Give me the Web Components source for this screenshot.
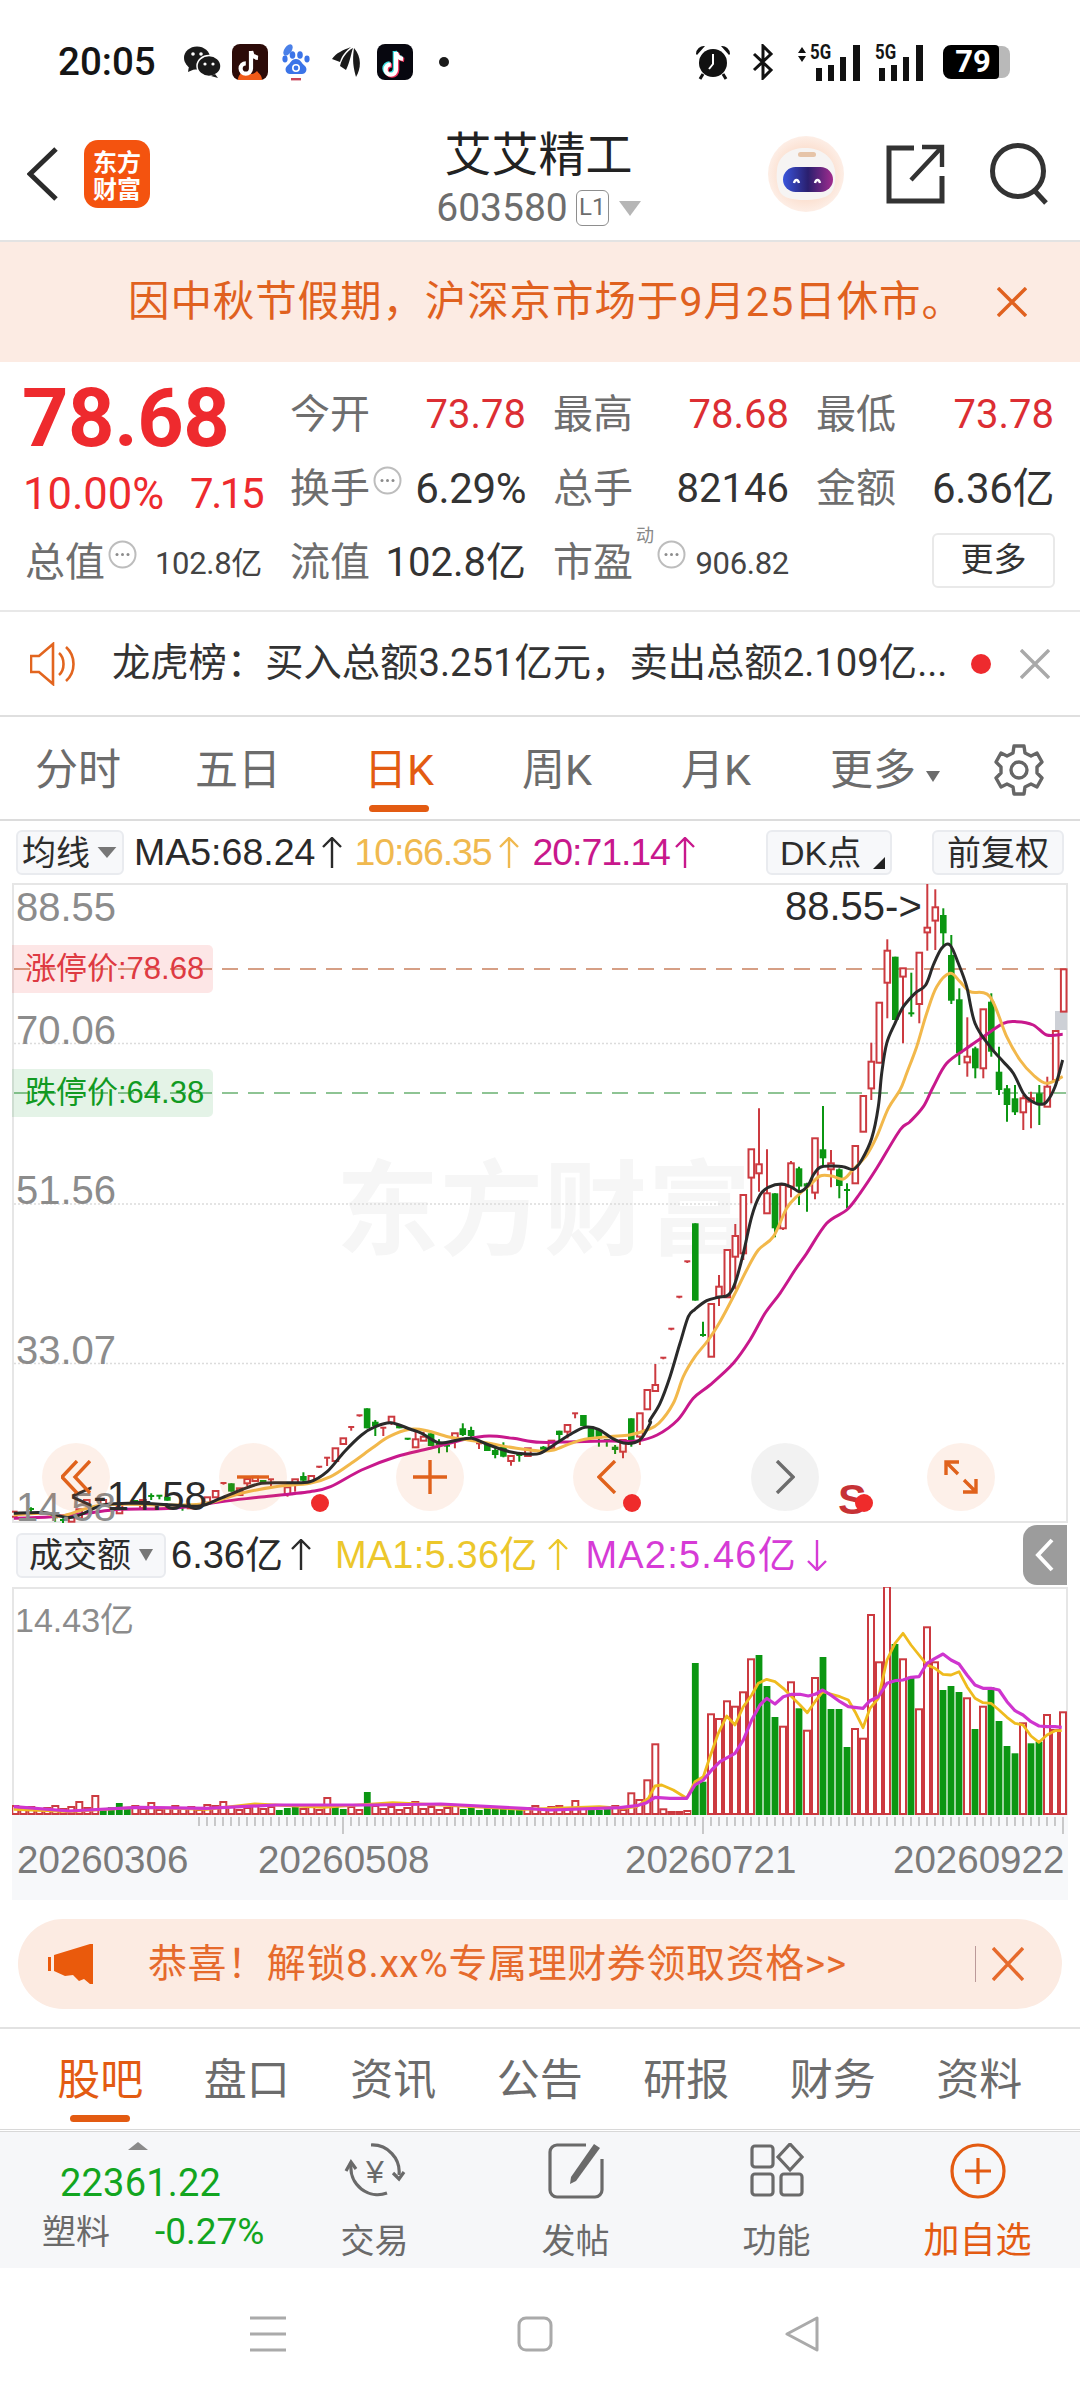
<!DOCTYPE html>
<html lang="zh">
<head>
<meta charset="utf-8">
<title>艾艾精工</title>
<style>
  html, body { margin: 0; padding: 0; background: #fff; }
  body {
    width: 1080px;
    height: 2400px;
    overflow: hidden;
    font-family: Roboto, "Noto Sans CJK SC", sans-serif;
  }
</style>
</head>
<body>
  <status-bar></status-bar>
  <stock-header></stock-header>
  <notice-bar>因中秋节假期，沪深京市场于9月25日休市。</notice-bar>
  <quote-panel></quote-panel>
  <ticker-bar>龙虎榜：买入总额3.251亿元，卖出总额2.109亿...</ticker-bar>
  <period-tabs></period-tabs>
  <k-chart></k-chart>
  <vol-chart></vol-chart>
  <promo-banner>恭喜！解锁8.xx%专属理财券领取资格&gt;&gt;</promo-banner>
  <sub-tabs></sub-tabs>
  <bottom-bar></bottom-bar>
  <nav-bar></nav-bar>

<script>
const CHART_FONT = '"Liberation Sans", "Noto Sans CJK SC", sans-serif'
const ORANGE = '#e35b12'
const RED_K = '#cc3a40'
const GREEN_K = '#0b9612'

// Curva suave por los puntos (catmull-rom a bezier)
function smooth (pts) {
  let d = `M${pts[0][0].toFixed(1)} ${pts[0][1].toFixed(1)}`
  for (let i = 0; i < pts.length - 1; i++) {
    const p0 = pts[i - 1] || pts[i]
    const p1 = pts[i]
    const p2 = pts[i + 1]
    const p3 = pts[i + 2] || p2
    const c1x = p1[0] + (p2[0] - p0[0]) / 6
    const c1y = p1[1] + (p2[1] - p0[1]) / 6
    const c2x = p2[0] - (p3[0] - p1[0]) / 6
    const c2y = p2[1] - (p3[1] - p1[1]) / 6
    d += `C${c1x.toFixed(1)} ${c1y.toFixed(1)} ${c2x.toFixed(1)} ${c2y.toFixed(1)} ${p2[0].toFixed(1)} ${p2[1].toFixed(1)}`
  }
  return d
}

function polyline (pts) {
  return pts.map(p => p[0].toFixed(1) + ',' + p[1].toFixed(1)).join(' ')
}

// Flecha fina de las leyendas de medias
function arrow (color, down, ml = 6) {
  const d = down ? 'M12 1v30M3 22l9 9 9-9' : 'M12 31V1M3 10l9-9 9 9'
  return `<svg width="24" height="32" viewBox="0 0 24 32" fill="none" stroke="${color}" stroke-width="2.4" style="margin-left:${ml}px;flex:none"><path d="${d}"/></svg>`
}

// Barra de estado
class StatusBar extends HTMLElement {
  constructor () {
    super()
    this.attachShadow({ mode: 'open' })
  }

  static Styles = `
    :host { display: flex; height: 100px; align-items: center; padding: 24px 0 0 58px; box-sizing: border-box; color: #151515; }
    .time { font: 500 38.5px/40px Roboto, sans-serif; width: 125px; letter-spacing: 0; }
    .left { display: flex; align-items: center; }
    .right { display: flex; align-items: center; margin-left: auto; margin-right: 70px; }
    svg { display: block; }
    .g5 { position: relative; width: 67px; height: 38px; }
    .g5 b { position: absolute; top: -3px; font: 700 21px/24px Roboto, sans-serif; transform: scaleX(.8); transform-origin: left top; }
    .g5 svg { position: absolute; left: 0; top: 0; }
    .batt { position: relative; width: 67px; height: 34px; margin-left: 18px; }
    .batt span { position: absolute; left: 0; top: 0; width: 56px; height: 34px; background: #000; color: #fff; border-radius: 8px 4px 4px 8px;
      font: 700 31px/34px Roboto, sans-serif; text-align: center; padding-left: 4px; box-sizing: border-box; }
    .batt i { position: absolute; left: 50px; top: 1px; width: 17px; height: 32px; background: #b9b9b9; border-radius: 0 8px 8px 0; }
  `

  connectedCallback () {
    this.render()
  }

  render () {
    const note = (c, dx, dy) => `<path d="M${19 + dx} ${8 + dy}v17.5a5.2 5.2 0 1 1-5.2-5.2" fill="none" stroke="${c}" stroke-width="4.2"/><path d="M${19 + dx} ${8 + dy}c.6 4 3 6.4 7 6.8" fill="none" stroke="${c}" stroke-width="4.2"/>`
    this.shadowRoot.innerHTML = /* HTML */`
      <style>${StatusBar.Styles}</style>
      <span class="time">20:05</span>
      <div class="left">
        <svg width="38" height="34" viewBox="0 0 38 34" style="margin-right:11px">
          <ellipse cx="14" cy="13" rx="13" ry="11.5" fill="#1a1a1a"/><path d="M6 21l-1 6 7-3z" fill="#1a1a1a"/>
          <ellipse cx="26" cy="21" rx="12" ry="10.5" fill="#1a1a1a" stroke="#fff" stroke-width="1.5"/><path d="M32 29l3 4-7-2z" fill="#1a1a1a"/>
          <circle cx="10" cy="9" r="1.8" fill="#fff"/><circle cx="18" cy="9" r="1.8" fill="#fff"/>
          <circle cx="22" cy="19" r="1.6" fill="#fff"/><circle cx="30" cy="19" r="1.6" fill="#fff"/>
        </svg>
        <svg width="36" height="36" viewBox="0 0 36 36" style="margin-right:12px">
          <rect width="36" height="36" rx="8" fill="#2c0b08"/>
          <path d="M6 36c0-5 3-6 5-9 1 2 3 3 7 3s6-2 7-3c2 3 5 4 5 9z" fill="#f05a18"/>
          ${note('#fff', 0, -1)}
        </svg>
        <svg width="32" height="37" viewBox="0 0 32 37" style="margin-right:20px">
          <ellipse cx="8" cy="6" rx="3.6" ry="6.4" transform="rotate(35 8 6)" fill="#4a80e8"/>
          <ellipse cx="5" cy="15" rx="2.6" ry="3.4" fill="#3b74e8"/><ellipse cx="12.5" cy="11" rx="2.8" ry="3.8" fill="#3b74e8"/>
          <ellipse cx="20" cy="11" rx="2.8" ry="3.8" fill="#3b74e8"/><ellipse cx="27" cy="15" rx="2.6" ry="3.4" fill="#3b74e8"/>
          <path d="M16 15c5 0 5 4 9 7 3 3 1 8-3 8H10c-4 0-6-5-3-8 4-3 4-7 9-7z" fill="#3b74e8"/>
          <circle cx="16" cy="24" r="3.2" fill="none" stroke="#fff" stroke-width="1.6"/>
          <rect x="11" y="34" width="10" height="2.4" fill="#c9465a"/>
        </svg>
        <svg width="30" height="32" viewBox="0 0 30 32" style="margin-right:15px">
          <path d="M0 13C4 7 11 4 19 1c-5 4-9 8-11 15z" fill="#1a1a1a"/>
          <path d="M8 20C10 12 15 5 21 2c-2 6-3 14-7 22z" fill="#1a1a1a"/>
          <path d="M22 2c-1 8-2 16 2 29 5-8 6-20-2-29z" fill="#1a1a1a"/>
        </svg>
        <svg width="36" height="36" viewBox="0 0 36 36" style="margin-right:26px">
          <rect width="36" height="36" rx="8" fill="#07070f"/>
          ${note('#3fe2e6', -1.2, -1)}${note('#f0315a', 1.2, 1)}${note('#fff', 0, 0)}
        </svg>
        <svg width="10" height="10"><circle cx="5" cy="5" r="5" fill="#1a1a1a"/></svg>
      </div>
      <div class="right">
        <svg width="38" height="38" viewBox="0 0 38 38" style="margin-right:20px">
          <path d="M2 11a8 8 0 0 1 9-8l-8 9zM36 11a8 8 0 0 0-9-8l8 9z" fill="#111"/>
          <circle cx="19" cy="20" r="14" fill="#111"/>
          <path d="M19 11v10l-4 5" fill="none" stroke="#fff" stroke-width="2"/>
          <path d="M9 31l-3 5M29 31l3 5" stroke="#111" stroke-width="3"/>
        </svg>
        <svg width="22" height="36" viewBox="0 0 22 36" style="margin-right:21px">
          <path d="M2 10l17 16-8 8V2l8 8L2 26" fill="none" stroke="#111" stroke-width="3"/>
        </svg>
        <div class="g5">
          <svg width="67" height="38" viewBox="0 0 67 38">
            <path d="M3 10l4-6 4 6zM3 13h8l-4 6z" fill="#111"/>
            <path d="M21 38V25h6v13zM33 38V22h6v16zM45 38V14h6v24zM58 38V2h7v36z" fill="#111"/>
          </svg>
          <b style="left:15px">5G</b>
        </div>
        <div class="g5" style="margin-left:13px;width:50px">
          <svg width="50" height="38" viewBox="0 0 50 38">
            <path d="M4 38V25h6v13zM16 38V22h6v16zM28 38V14h6v24zM41 38V2h7v36z" fill="#111"/>
          </svg>
          <b style="left:0">5G</b>
        </div>
        <div class="batt"><i></i><span>79</span></div>
      </div>
    `
  }
}

// Cabecera con nombre de la accion
class StockHeader extends HTMLElement {
  constructor () {
    super()
    this.attachShadow({ mode: 'open' })
  }

  static Styles = `
    :host { display: grid; grid-template-columns: 1fr auto 1fr; height: 142px; box-sizing: border-box; border-bottom: 2px solid #e3e3e3; padding: 0 30px 0 27px; }
    .side { display: flex; align-items: center; padding-top: 8px; }
    .side.r { justify-content: flex-end; }
    .logo { width: 66px; height: 68px; background: #f4530f; border-radius: 14px; margin-left: 26px; color: #fff;
      font: 700 24px/27px "Noto Sans CJK SC", sans-serif; text-align: center; padding-top: 7px; box-sizing: border-box; letter-spacing: 0; }
    .mid { text-align: center; padding-top: 23px; }
    .name { font: 400 47px/56px "Noto Sans CJK SC", sans-serif; color: #222; }
    .code { display: flex; align-items: center; justify-content: center; height: 50px; margin-top: 4px; color: #6d6d6d; font: 400 39px/50px Roboto, sans-serif; }
    .l1 { width: 33px; height: 36px; box-sizing: border-box; border: 1.5px solid #8e8e8e; border-radius: 6px; margin-left: 8px; font: 400 24px/33px Roboto, sans-serif; text-align: center; }
    .tri { width: 0; height: 0; border-left: 11px solid transparent; border-right: 11px solid transparent; border-top: 15px solid #b6b6b6; margin-left: 10px; }
    svg { display: block; }
  `

  connectedCallback () {
    this.render()
  }

  render () {
    this.shadowRoot.innerHTML = /* HTML */`
      <style>${StockHeader.Styles}</style>
      <div class="side">
        <svg width="31" height="54" viewBox="0 0 31 54"><path d="M29 2L3 27l26 25" fill="none" stroke="#2b2b2b" stroke-width="5"/></svg>
        <div class="logo">东方<br>财富</div>
      </div>
      <div class="mid">
        <div class="name">艾艾精工</div>
        <div class="code">603580<span class="l1">L1</span><span class="tri"></span></div>
      </div>
      <div class="side r">
        <svg width="76" height="76" viewBox="0 0 76 76" style="margin-right:42px">
          <defs>
            <radialGradient id="halo"><stop offset=".55" stop-color="#fbdcca"/><stop offset="1" stop-color="#fdeee6"/></radialGradient>
            <linearGradient id="visor"><stop offset="0" stop-color="#3a55dc"/><stop offset=".5" stop-color="#2a1f6e"/><stop offset="1" stop-color="#a12c8e"/></linearGradient>
          </defs>
          <circle cx="38" cy="38" r="38" fill="url(#halo)"/>
          <path d="M9 34c1-14 13-22 28-22 15 0 28 8 30 22 1 10 0 18-4 23-6 6-17 7-27 7-11 0-21-2-24-8-3-6-4-14-3-22z" fill="#f6f4f3"/>
          <rect x="30" y="16" width="18" height="5" rx="2.5" fill="#e6c4a8"/>
          <rect x="15" y="31" width="50" height="25" rx="12.5" fill="url(#visor)"/>
          <path d="M26 47c1-4 4-4 5 0M47 47c1-4 4-4 5 0" fill="none" stroke="#fff" stroke-width="2.4"/>
        </svg>
        <svg width="60" height="60" viewBox="0 0 60 60" style="margin-right:44px">
          <path d="M28 4H3v53h53V32" fill="none" stroke="#333" stroke-width="5"/>
          <path d="M25 36L55 4M36 3h20v20" fill="none" stroke="#333" stroke-width="4.4"/>
        </svg>
        <svg width="60" height="62" viewBox="0 0 60 62">
          <ellipse cx="28" cy="28" rx="25.5" ry="25.5" fill="none" stroke="#333" stroke-width="5"/>
          <path d="M44 47l12 13" stroke="#333" stroke-width="5"/>
        </svg>
      </div>
    `
  }
}

// Aviso naranja de cierre de mercado
class NoticeBar extends HTMLElement {
  constructor () {
    super()
    this.attachShadow({ mode: 'open' })
    this.shadowRoot.innerHTML = /* HTML */`
      <style>
        :host { display: flex; align-items: center; height: 120px; background: #fcebe3; padding: 0 53px 0 128px; color: #e0611f;
          font: 400 41.5px/1 Roboto, "Noto Sans CJK SC", sans-serif; letter-spacing: .9px; white-space: nowrap; }
        svg { margin-left: auto; display: block; }
      </style>
      <slot></slot>
      <svg width="30" height="30" viewBox="0 0 30 30"><path d="M1 1l28 28M29 1L1 29" stroke="#e0611f" stroke-width="3.4"/></svg>
    `
  }
}

// Icono pequeno gris con puntos
class DotsIcon extends HTMLElement {
  constructor () {
    super()
    this.attachShadow({ mode: 'open' })
    this.shadowRoot.innerHTML = /* HTML */`
      <style>:host { display: inline-block; flex: none; width: 29px; height: 29px; align-self: flex-start; }</style>
      <svg width="29" height="29" viewBox="0 0 29 29">
        <circle cx="14.5" cy="14.5" r="13" fill="none" stroke="#bdbdbd" stroke-width="2"/>
        <circle cx="9" cy="14.5" r="1.5" fill="#8c8c8c"/><circle cx="14.5" cy="14.5" r="1.5" fill="#8c8c8c"/><circle cx="20" cy="14.5" r="1.5" fill="#8c8c8c"/>
      </svg>
    `
  }
}

// Panel de cotizacion
class QuotePanel extends HTMLElement {
  constructor () {
    super()
    this.attachShadow({ mode: 'open' })
  }

  static Styles = `
    :host { display: grid; grid-template-columns: 265px 236px 27px 236px 27px 238px; grid-template-rows: repeat(3, 74px); height: 250px; box-sizing: border-box;
      padding: 16px 0 0 25px; border-bottom: 2px solid #e8e8e8; font: 400 40px/1 Roboto, "Noto Sans CJK SC", sans-serif; color: #333; }
    .big { grid-column: 1; grid-row: 1 / 3; display: flex; flex-direction: column; color: #ee2a2e; }
    .big b { font: 700 81px/76px Roboto, sans-serif; margin: 3px 0 0 -3px; letter-spacing: -.4px; }
    .chg { display: flex; justify-content: space-between; width: 239px; font-size: 43.5px; margin: 16px 0 0 -2px; }
    .chg span + span { font-size: 42px; letter-spacing: -2.5px; }
    .cell { display: flex; align-items: center; white-space: nowrap; }
    .cell > :last-child { margin-left: auto; }
    .c1 { grid-column: 2; } .c2 { grid-column: 4; } .c3 { grid-column: 6; }
    .lb { color: #6e6e6e; }
    .up { color: #dc2e33; }
    .v { font-size: 42px; letter-spacing: -.4px; }
    .sm { font-size: 31px; color: #444; letter-spacing: -.3px; }
    .tot { grid-column: 1; grid-row: 3; width: 237px; }
    sup { font-size: 18px; color: #888; align-self: flex-start; margin: 0 0 0 3px; line-height: 20px; }
    dots-icon { margin: 10px 0 0 3px; }
    .more { justify-self: end; align-self: center; width: 123px; height: 55px; border: 2px solid #e9e9e9; border-radius: 6px; box-sizing: border-box;
      font-size: 33px; line-height: 50px; text-align: center; margin: 0 -1px 6px 0; }
  `

  connectedCallback () {
    this.render()
  }

  render () {
    this.shadowRoot.innerHTML = /* HTML */`
      <style>${QuotePanel.Styles}</style>
      <div class="big">
        <b>78.68</b>
        <div class="chg"><span>10.00%</span><span>7.15</span></div>
      </div>
      <div class="cell c1" style="grid-row:1"><span class="lb">今开</span><span class="up">73.78</span></div>
      <div class="cell c2" style="grid-row:1"><span class="lb">最高</span><span class="up">78.68</span></div>
      <div class="cell c3" style="grid-row:1"><span class="lb">最低</span><span class="up">73.78</span></div>
      <div class="cell c1" style="grid-row:2"><span class="lb">换手</span><dots-icon></dots-icon><span class="v">6.29%</span></div>
      <div class="cell c2" style="grid-row:2"><span class="lb">总手</span><span>82146</span></div>
      <div class="cell c3" style="grid-row:2"><span class="lb">金额</span><span class="v">6.36亿</span></div>
      <div class="cell tot" style="grid-row:3"><span class="lb">总值</span><dots-icon></dots-icon><span class="sm">102.8亿</span></div>
      <div class="cell c1" style="grid-row:3"><span class="lb">流值</span><span>102.8亿</span></div>
      <div class="cell c2" style="grid-row:3"><span class="lb">市盈</span><sup>动</sup><dots-icon></dots-icon><span class="sm">906.82</span></div>
      <div class="more c3" style="grid-row:3">更多</div>
    `
  }
}

// Barra de noticia con altavoz
class TickerBar extends HTMLElement {
  constructor () {
    super()
    this.attachShadow({ mode: 'open' })
    this.shadowRoot.innerHTML = /* HTML */`
      <style>
        :host { display: flex; align-items: center; height: 105px; box-sizing: border-box; border-bottom: 2px solid #dfdfdf; padding: 0 30px 0 30px;
          color: #333; font: 400 38.3px/1 Roboto, "Noto Sans CJK SC", sans-serif; white-space: nowrap; }
        .txt { margin-left: 32px; }
        .dot { width: 20px; height: 20px; background: #ee2a2e; border-radius: 50%; margin-left: auto; }
        svg { display: block; flex: none; }
      </style>
      <svg width="50" height="44" viewBox="0 0 50 44" fill="none" stroke="#e2651f" stroke-width="2.6">
        <path d="M1 14h8L23 2v40L9 30H1z"/>
        <path d="M29 11c6 5 6 17 0 22M36 5c10 9 10 25 0 34"/>
      </svg>
      <span class="txt"><slot></slot></span>
      <span class="dot"></span>
      <svg width="30" height="30" viewBox="0 0 30 30" style="margin-left:29px"><path d="M1 1l28 28M29 1L1 29" stroke="#a9a9a9" stroke-width="3.4"/></svg>
    `
  }
}

// Pestanas de periodo
class PeriodTabs extends HTMLElement {
  constructor () {
    super()
    this.attachShadow({ mode: 'open' })
  }

  static Styles = `
    :host { display: flex; height: 104px; box-sizing: border-box; border-bottom: 2px solid #dcdcdc; padding: 30px 0 0 35px;
      font: 400 43px/46px Roboto, "Noto Sans CJK SC", sans-serif; color: #6c6c6c; white-space: nowrap; }
    .t { display: flex; flex-direction: column; align-items: center; }
    .on { color: ${ORANGE}; }
    .on i { display: block; width: 60px; height: 7px; background: ${ORANGE}; border-radius: 4px; margin-top: 12px; }
    .tri { display: inline-block; width: 0; height: 0; border-left: 7px solid transparent; border-right: 7px solid transparent; border-top: 11px solid #6c6c6c; margin: 0 0 12px 10px; }
    svg { display: block; margin: -3px 0 0 53px; }
  `

  connectedCallback () {
    this.render()
  }

  render () {
    const tabs = [['分时', 0], ['五日', 74], ['日K', 83], ['周K', 88], ['月K', 89], ['更多', 79]]
    tabs[2][2] = 1
    const html = tabs.map(([n, m, on]) => `<div class="t ${on ? 'on' : ''}" style="margin-left:${m}px">${n}${on ? '<i></i>' : ''}</div>`).join('')
    this.shadowRoot.innerHTML = /* HTML */`
      <style>${PeriodTabs.Styles}</style>
      ${html}
      <span class="tri" style="align-self:center;margin-top:-2px"></span>
      <svg width="52" height="52" viewBox="0 0 52 52" fill="none" stroke="#666" stroke-width="3.4" stroke-linejoin="round">
        <path d="M21 2h10l1 7 6 3 6-3 5 9-5 5v6l5 5-5 9-6-3-6 3-1 7H21l-1-7-6-3-6 3-5-9 5-5v-6l-5-5 5-9 6 3 6-3z"/>
        <circle cx="26" cy="26" r="8"/>
      </svg>
    `
  }
}

// Boton pequeno de la barra de graficos
class ToolBtn extends HTMLElement {
  constructor () {
    super()
    this.attachShadow({ mode: 'open' })
    this.shadowRoot.innerHTML = /* HTML */`
      <style>
        :host { display: inline-flex; align-items: center; justify-content: center; position: relative; flex: none; height: 45px; box-sizing: border-box; background: #f7f8fa;
          border: 2px solid #e9ebef; border-radius: 6px; color: #2c2c2c; font: 400 34px/1 ${CHART_FONT}; white-space: nowrap; }
      </style>
      <slot></slot>
    `
  }
}

// Boton redondo sobre el grafico
class ChartBtn extends HTMLElement {
  constructor () {
    super()
    this.attachShadow({ mode: 'open' })
    this.shadowRoot.innerHTML = /* HTML */`
      <style>
        :host { position: absolute; width: 68px; height: 68px; border-radius: 50%; background: rgba(240, 110, 40, .1); display: flex; align-items: center; justify-content: center; }
        :host([gray]) { background: rgba(110, 110, 110, .09); }
      </style>
      <slot></slot>
    `
  }
}

// Grafico de velas
class KChart extends HTMLElement {
  constructor () {
    super()
    this.attachShadow({ mode: 'open' })
  }

  static Styles = `
    :host { display: block; height: 702px; padding: 9px 0 0 16px; box-sizing: border-box; position: relative; }
    .bar { display: flex; align-items: center; height: 45px; font: 400 37.5px/1 ${CHART_FONT}; white-space: nowrap; color: #2a2a2a; padding-right: 16px; }
    .bar > span { flex: none; }
    .frame { position: relative; width: 1056px; height: 640px; margin: 8px 0 0 -4px; box-sizing: border-box; border: 2px solid #e6e6e6; border-right-width: 2px; font-family: ${CHART_FONT}; }
    .frame > svg { position: absolute; left: -2px; top: -2px; }
    .lb { position: absolute; white-space: nowrap; }
    .wm { position: absolute; left: 322px; top: 260px; font: 700 103px/116px "Noto Sans CJK SC", sans-serif; letter-spacing: 1px; color: #f6f6f6; white-space: nowrap; }
    .tag { position: absolute; left: -2px; height: 48px; font-size: 31px; line-height: 48px; padding: 0 9px 0 13px; border-radius: 0 5px 5px 0; white-space: nowrap; }
    .tag.u { background: rgba(240, 60, 60, .13); color: #de3a42; top: 60px; }
    .tag.d { background: rgba(30, 160, 60, .12); color: #129a22; top: 184px; }
    .dot { position: absolute; width: 18px; height: 18px; border-radius: 50%; background: #ef2b2b; }
    .s { position: absolute; font: 700 43px/43px ${CHART_FONT}; color: #c63236; }
    .tri { display: inline-block; width: 0; height: 0; border-left: 11px solid transparent; border-right: 11px solid transparent; border-top: 13px solid #777; margin-left: 6px; }
    .cor { position: absolute; right: 5px; bottom: 4px; width: 0; height: 0; border-left: 12px solid transparent; border-bottom: 12px solid #222; }
  `

  connectedCallback () {
    this.render()
  }

  render () {
    const z7 = (x, y) => [x / 2.904, 1380 + y / 3]
    const z8 = (x, y) => [540 + x / 2.904, 1380 + y / 3]
    const z9 = (x, y) => [750 + x / 3, 880 + y / 3]
    const z10 = (x, y) => [640 + x / 3, 1080 + y / 3]
    const mapAll = (fn, list) => list.map(p => fn(p[0], p[1]))

    // x, mecha arriba, cuerpo arriba, cuerpo abajo, mecha abajo, color
    const candles = []
    const add = (fn, list) => list.forEach(([x, wt, bt, bb, wb, c]) => {
      const [rx, ry1] = fn(x, wt)
      candles.push({ x: rx, wt: ry1, bt: fn(x, bt)[1], bb: fn(x, bb)[1], wb: fn(x, wb)[1], c })
    })

    add(z7, [
      [40, 395, 395, 410, 410, 'r'], [90, 382, 387, 395, 395, 'g'], [160, 410, 412, 418, 425, 'g'], [183, 415, 420, 424, 430, 'g'], [208, 405, 408, 425, 425, 'r'], [230, 388, 388, 415, 415, 'r'],
      [252, 360, 360, 375, 375, 'r'], [300, 360, 360, 375, 375, 'r'], [347, 375, 375, 400, 400, 'r'], [392, 360, 360, 372, 372, 'g'], [415, 360, 360, 385, 385, 'r'], [439, 340, 348, 353, 360, 'g'],
      [463, 345, 347, 351, 358, 'g'], [486, 350, 350, 362, 362, 'g'], [530, 380, 380, 388, 392, 'g'], [553, 375, 375, 385, 385, 'r'], [602, 352, 352, 368, 368, 'r'], [626, 333, 333, 352, 352, 'r'],
      [649, 309, 309, 314, 314, 'r'], [672, 310, 310, 335, 335, 'g'], [696, 325, 325, 345, 345, 'r'], [718, 295, 297, 310, 318, 'r'], [741, 290, 290, 303, 303, 'r'], [764, 300, 300, 310, 310, 'g'], [787, 298, 298, 305, 318, 'r'],
      [835, 322, 322, 342, 350, 'r'], [857, 298, 298, 310, 335, 'r'], [881, 277, 288, 302, 308, 'g'], [904, 288, 288, 303, 303, 'r'], [927, 260, 260, 264, 264, 'r'], [950, 233, 233, 238, 258, 'r'], [974, 205, 205, 243, 243, 'r'], [997, 175, 175, 192, 192, 'r'],
      [1020, 141, 141, 147, 152, 'r'], [1044, 106, 106, 110, 110, 'r'], [1066, 85, 85, 145, 145, 'g'], [1090, 120, 125, 138, 168, 'g'], [1113, 143, 143, 152, 168, 'r'], [1137, 110, 110, 128, 135, 'r'], [1160, 135, 135, 145, 145, 'g'],
      [1184, 176, 176, 180, 180, 'g'], [1207, 155, 178, 202, 202, 'r'], [1230, 155, 170, 182, 182, 'r'], [1252, 160, 160, 198, 198, 'g'], [1275, 178, 185, 195, 220, 'g'], [1298, 197, 197, 205, 217, 'g'], [1321, 160, 160, 175, 205, 'r'],
      [1344, 130, 145, 165, 168, 'g'], [1368, 140, 150, 168, 172, 'g'], [1391, 190, 190, 197, 207, 'r'], [1415, 190, 190, 213, 213, 'g'], [1438, 203, 210, 225, 235, 'g'], [1462, 187, 200, 230, 232, 'g'], [1484, 228, 228, 243, 257, 'r'], [1508, 220, 225, 232, 245, 'g'], [1533, 205, 205, 228, 228, 'r']
    ])
    add(z8, [
      [10, 198, 200, 215, 215, 'g'], [33, 182, 182, 205, 205, 'r'], [56, 152, 152, 165, 183, 'g'], [80, 135, 135, 155, 175, 'r'], [102, 100, 100, 105, 115, 'r'], [126, 105, 105, 138, 138, 'g'], [148, 140, 140, 175, 175, 'g'], [171, 150, 150, 175, 200, 'g'],
      [194, 180, 180, 185, 200, 'g'], [218, 195, 200, 210, 222, 'g'], [241, 178, 180, 215, 235, 'r'], [265, 115, 115, 190, 200, 'g'], [290, 100, 100, 170, 195, 'r']
    ])
    add(z10, [
      [22, 930, 930, 988, 988, 'r'], [46, 852, 915, 933, 933, 'r'], [70, 833, 833, 838, 838, 'r'], [94, 746, 746, 751, 751, 'r'], [118, 650, 650, 655, 655, 'r'], [142, 544, 544, 549, 549, 'r'], [166, 430, 430, 662, 662, 'g'],
      [189, 725, 765, 770, 770, 'g'], [214, 672, 672, 830, 830, 'r'], [237, 585, 620, 650, 678, 'r'], [262, 510, 510, 652, 652, 'r'], [286, 432, 468, 530, 628, 'r'], [310, 345, 345, 520, 540, 'r'], [334, 208, 208, 293, 370, 'r'], [357, 85, 253, 280, 335, 'r'],
      [381, 208, 340, 400, 400, 'r'], [405, 340, 340, 445, 472, 'g'], [429, 310, 315, 445, 450, 'r'], [453, 243, 250, 320, 352, 'r'], [477, 260, 265, 320, 375, 'g'], [501, 308, 310, 320, 395, 'g'], [525, 175, 175, 338, 358, 'r'], [549, 78, 208, 235, 258, 'g'],
      [573, 210, 250, 268, 322, 'r'], [598, 265, 268, 318, 355, 'g'], [621, 310, 330, 338, 385, 'g'], [646, 198, 198, 310, 310, 'r'], [670, 48, 48, 155, 155, 'r']
    ])
    add(z9, [
      [364, 488, 545, 625, 660, 'r'], [388, 368, 368, 548, 550, 'r'], [412, 178, 212, 308, 415, 'r'], [436, 230, 230, 420, 420, 'g'], [459, 265, 265, 290, 490, 'r'], [484, 278, 400, 408, 410, 'g'], [508, 218, 218, 372, 430, 'r'],
      [532, 12, 143, 157, 212, 'r'], [556, 28, 82, 122, 210, 'r'], [580, 85, 105, 160, 200, 'g'], [604, 165, 225, 362, 372, 'g'], [628, 325, 358, 520, 555, 'g'], [652, 412, 530, 547, 590, 'r'], [676, 500, 505, 565, 595, 'g'],
      [700, 388, 388, 565, 595, 'r'], [724, 340, 365, 515, 530, 'g'], [747, 500, 575, 630, 645, 'g'], [771, 615, 625, 675, 725, 'g'], [795, 615, 655, 697, 705, 'g'], [820, 645, 655, 697, 750, 'r'], [843, 635, 655, 665, 745, 'r'],
      [868, 615, 640, 675, 735, 'g'], [892, 590, 620, 680, 680, 'r'], [917, 450, 453, 600, 603, 'r'], [941, 268, 268, 395, 395, 'r']
    ])

    let candleSvg = ''
    candles.forEach(k => {
      const col = k.c === 'r' ? RED_K : GREEN_K
      candleSvg += `<path d="M${k.x.toFixed(1)} ${k.wt.toFixed(1)}V${k.wb.toFixed(1)}" stroke="${col}" stroke-width="2"/>`
      if (k.bb - k.bt > 3) {
        candleSvg += k.c === 'r'
          ? `<rect x="${(k.x - 2.8).toFixed(1)}" y="${k.bt.toFixed(1)}" width="5.6" height="${(k.bb - k.bt).toFixed(1)}" fill="#fff" stroke="${col}" stroke-width="2"/>`
          : `<rect x="${(k.x - 3.3).toFixed(1)}" y="${k.bt.toFixed(1)}" width="6.6" height="${(k.bb - k.bt).toFixed(1)}" fill="${col}"/>`
      } else {
        candleSvg += `<path d="M${(k.x - 3).toFixed(1)} ${k.bt.toFixed(1)}h6" stroke="${col}" stroke-width="2"/>`
      }
    })

    const black = [
      ...mapAll(z7, [[40, 400], [130, 398], [210, 412], [300, 375], [400, 370], [500, 375], [580, 378], [640, 355], [700, 330], [760, 310], [830, 308], [900, 305], [950, 275], [1000, 215], [1050, 165], [1090, 140], [1135, 128], [1190, 147], [1225, 160], [1275, 188], [1330, 180], [1370, 175], [1420, 195], [1480, 215], [1530, 222]]),
      ...mapAll(z8, [[0, 220], [40, 195], [85, 165], [130, 142], [170, 148], [210, 175], [250, 190], [290, 180], [320, 130]]),
      ...mapAll(z10, [[30, 1020], [60, 970], [90, 890], [120, 790], [145, 710], [165, 688], [200, 662], [235, 652], [265, 645], [285, 610], [310, 520], [335, 410], [360, 345], [385, 322], [425, 312], [455, 322], [480, 335], [505, 315], [520, 285], [540, 262], [575, 258], [610, 260], [640, 268], [665, 240], [695, 175], [715, 80]]),
      ...mapAll(z9, [[395, 580], [410, 490], [435, 430], [460, 380], [495, 340], [527, 315], [550, 255], [575, 205], [600, 195], [625, 250], [650, 320], [675, 430], [720, 500], [760, 545], [790, 580], [820, 640], [840, 660], [868, 673], [890, 665], [915, 620], [938, 540]])
    ]
    const yellow = [
      ...mapAll(z7, [[40, 405], [130, 400], [180, 408], [300, 375], [500, 375], [600, 370], [700, 340], [800, 320], [900, 310], [960, 290], [1020, 250], [1080, 205], [1130, 170], [1190, 148], [1240, 152], [1300, 170], [1360, 180], [1420, 190], [1500, 205], [1568, 213]]),
      ...mapAll(z8, [[40, 210], [90, 190], [130, 178], [200, 170], [260, 165], [310, 150], [345, 130]]),
      ...mapAll(z10, [[100, 970], [130, 890], [165, 830], [205, 780], [240, 725], [280, 650], [320, 570], [355, 510], [400, 470], [440, 385], [475, 345], [510, 315], [540, 288], [575, 288], [610, 297], [640, 268], [680, 225], [710, 170], [745, 85], [780, 30]]),
      ...mapAll(z9, [[470, 580], [500, 500], [530, 400], [560, 320], [600, 280], [630, 305], [660, 335], [720, 350], [770, 470], [810, 540], [850, 585], [890, 610], [938, 590]])
    ]
    const purple = [
      ...mapAll(z7, [[40, 415], [150, 410], [250, 400], [350, 388], [500, 385], [640, 365], [750, 352], [900, 335], [960, 320], [1050, 270], [1150, 230], [1250, 205], [1350, 178], [1420, 168], [1490, 175], [1568, 187]]),
      ...mapAll(z8, [[100, 185], [200, 183], [280, 183], [340, 165], [400, 120]]),
      ...mapAll(z10, [[160, 955], [210, 915], [280, 850], [330, 780], [375, 700], [420, 640], [465, 570], [500, 520], [560, 430], [620, 390], [660, 340], [710, 265], [780, 150]]),
      ...mapAll(z9, [[480, 725], [520, 680], [550, 620], [590, 550], [650, 505], [700, 470], [760, 430], [800, 425], [850, 435], [890, 465], [938, 463]])
    ]

    // Etiquetas: posicion en coordenadas de pagina
    const label = (t, x, cy, color, size = 40) => `<span class="lb" style="left:${x - 14}px;top:${cy - size / 2 - 885}px;font-size:${size}px;line-height:${size}px;color:${color}">${t}</span>`
    const stroke = 'fill="none" stroke="#e0621c" stroke-width="3.4"'
    const btn = (cx, icon, gray) => `<chart-btn ${gray ? 'gray' : ''} style="left:${cx - 48}px;top:558px">${icon}</chart-btn>`

    this.shadowRoot.innerHTML = /* HTML */`
      <style>${KChart.Styles}</style>
      <div class="bar">
        <tool-btn style="width:108px">均线<span class="tri" style="transform:scale(.85)"></span></tool-btn>
        <span style="margin-left:10px">MA5:68.24</span>${arrow('#2a2a2a', false, 5)}
        <span style="margin-left:10px;color:#f0b94f;letter-spacing:-1.1px">10:66.35</span>${arrow('#f0b94f', false, 5)}
        <span style="margin-left:12px;color:#c8188c;letter-spacing:-1.1px">20:71.14</span>${arrow('#c8188c', false, 3)}
        <tool-btn style="width:126px;margin-left:auto;justify-content:flex-start;padding-left:12px">DK点<span class="cor"></span></tool-btn>
        <tool-btn style="width:132px;margin-left:40px">前复权</tool-btn>
      </div>
      <div class="frame">
        <div class="wm">东方财富</div>
        <svg width="1056" height="640" viewBox="12 883 1056 640">
          <path d="M14 1043.5H1066M14 1204H1066M14 1363.5H1066" stroke="#dcdcdc" stroke-width="1.4" stroke-dasharray="2 2"/>
          <path d="M14 969H1066" stroke="#c9805e" stroke-width="1.6" stroke-dasharray="16 10"/>
          <path d="M14 1093H1066" stroke="#69b172" stroke-width="1.6" stroke-dasharray="16 10"/>
          <rect x="1055" y="1011" width="12" height="19" fill="#cdd0d6"/>
          ${candleSvg}
          <path d="${smooth(purple)}" fill="none" stroke="#c8188c" stroke-width="3"/>
          <path d="${smooth(yellow)}" fill="none" stroke="#f2b84b" stroke-width="3"/>
          <path d="${smooth(black)}" fill="none" stroke="#2a2a2a" stroke-width="3"/>
        </svg>
        ${label('88.55', 16, 907, '#8c8c8c')}
        ${label('70.06', 16, 1030, '#8c8c8c')}
        ${label('51.56', 16, 1190, '#8c8c8c')}
        ${label('33.07', 16, 1350, '#8c8c8c')}
        ${label('14.58', 16, 1507, '#8c8c8c')}
        ${label('&lt;-14.58', 70, 1496, '#2b2b2b')}
        ${label('88.55-&gt;', 785, 906, '#2b2b2b')}
        <span class="tag u">涨停价:78.68</span>
        <span class="tag d">跌停价:64.38</span>
        ${btn(76, `<svg width="30" height="34" viewBox="0 0 30 34" ${stroke}><path d="M16 1L1 17l15 16M29 1L14 17l15 16"/></svg>`)}
        ${btn(253, `<svg width="32" height="4"><path d="M0 2h32" stroke="#e0621c" stroke-width="3.4"/></svg>`)}
        ${btn(430, `<svg width="34" height="34" viewBox="0 0 34 34" ${stroke}><path d="M0 17h34M17 0v34"/></svg>`)}
        ${btn(607, `<svg width="20" height="34" viewBox="0 0 20 34" ${stroke}><path d="M18 1L2 17l16 16"/></svg>`)}
        ${btn(785, `<svg width="20" height="34" viewBox="0 0 20 34" fill="none" stroke="#6d6d6d" stroke-width="3.4"><path d="M2 1l16 16L2 33"/></svg>`, true)}
        ${btn(961, `<svg width="34" height="34" viewBox="0 0 34 34" ${stroke}><path d="M2 15V2h13M2 2l12 12M32 19v13H19M32 32L20 20"/></svg>`)}
        <span class="dot" style="left:297px;top:609px"></span>
        <span class="dot" style="left:609px;top:609px"></span>
        <span class="s" style="left:824px;top:593px">S</span>
        <span class="dot" style="left:841px;top:609px"></span>
      </div>
    `
  }
}

// Grafico de volumen con eje de fechas
class VolChart extends HTMLElement {
  constructor () {
    super()
    this.attachShadow({ mode: 'open' })
  }

  static Styles = `
    :host { display: block; height: 377px; font-family: ${CHART_FONT}; }
    .bar { display: flex; align-items: center; height: 64px; padding: 0 13px 0 16px; box-sizing: border-box; font-size: 38px; line-height: 1; white-space: nowrap; color: #2a2a2a; }
    .bar > span { flex: none; }
    .tab { margin-left: auto; width: 44px; height: 60px; background: #9c9c9c; border-radius: 14px 0 0 14px; display: flex; align-items: center; justify-content: center; }
    .tri { display: inline-block; width: 0; height: 0; border-left: 7px solid transparent; border-right: 7px solid transparent; border-top: 12px solid #777; margin-left: 8px; }
    .frame { position: relative; width: 1056px; height: 228px; margin-left: 12px; box-sizing: border-box; border: 2px solid #e6e6e6; border-bottom: 0; }
    .frame svg { position: absolute; left: -2px; top: -2px; }
    .max { position: absolute; left: 1px; top: 13px; font-size: 34px; line-height: 36px; color: #8c8c8c; }
    .axis { width: 1056px; height: 85px; margin-left: 12px; background: #f7f8fa; }
    .axis svg { display: block; }
    .dates { display: grid; grid-template-columns: 241px 367px 268px 1fr; padding-left: 5px; margin-top: 3px; font-size: 38.5px; line-height: 44px; color: #7a7a7a; }
  `

  connectedCallback () {
    this.render()
  }

  render () {
    const base = 1814
    // x, tope en coordenadas del zoom, color (de derecha a izquierda)
    const bars = [[1329, 397, 'r'], [1305, 450, 'r'], [1281, 405, 'r'], [1257, 485, 'g'], [1233, 490, 'g'], [1209, 430, 'r'], [1185, 520, 'g'], [1161, 498, 'g'], [1137, 423, 'g'], [1113, 322, 'g'],
      [1089, 380, 'r'], [1065, 447, 'g'], [1041, 355, 'r'], [1017, 336, 'g'], [993, 318, 'g'], [969, 330, 'g'], [945, 247, 'r'], [921, 142, 'r'], [897, 388, 'r'], [873, 290, 'g'], [849, 238, 'r'], [825, 192, 'g'],
      [801, 20, 'r'], [777, 247, 'r'], [753, 105, 'r'], [729, 476, 'r'], [705, 447, 'r'], [681, 501, 'g'], [657, 387, 'g'], [633, 387, 'g'], [609, 231, 'g'], [585, 294, 'r'], [561, 452, 'r'], [537, 385, 'g'], [513, 307, 'r'],
      [489, 440, 'r'], [465, 411, 'g'], [441, 318, 'g'], [417, 225, 'g'], [393, 238, 'r'], [369, 337, 'r'], [345, 380, 'r'], [321, 364, 'r'], [297, 417, 'r'], [273, 403, 'r'], [249, 605, 'g'], [226, 249, 'g'],
      [202, 693, 'r'], [178, 696, 'r'], [154, 696, 'r'], [130, 688, 'r'], [106, 493, 'r'], [82, 601, 'r'], [58, 660, 'r'], [34, 640, 'r'], [10, 690, 'r']]
    const list = bars.map(([x, t, c]) => ({ x: 620 + x / 3, top: 1580 + t / 3, c }))

    // Barras bajas de la parte izquierda
    const spikes = { 79: 12, 95: 18, 118: 11, 151: 11, 207: 9, 222: 12, 327: 16, 367: 22, 415: 12, 561: 8, 575: 13 }
    const greens = [[103, 130], [275, 296], [335, 345], [361, 372], [461, 523], [585, 613]]
    for (let x = 623.3 - 8; x > 13; x -= 8) {
      const spike = Object.keys(spikes).find(s => Math.abs(s - x) <= 4)
      const h = spike ? spikes[spike] : 4 + Math.round(x / 8) * 7 % 5
      const g = greens.some(([a, b]) => x >= a && x <= b)
      list.push({ x, top: base - h, c: g ? 'g' : 'r' })
    }

    let barSvg = ''
    list.forEach(b => {
      barSvg += b.c === 'g'
        ? `<rect x="${(b.x - 3.4).toFixed(1)}" y="${b.top.toFixed(1)}" width="6.8" height="${(base + 1 - b.top).toFixed(1)}" fill="${GREEN_K}"/>`
        : `<rect x="${(b.x - 3).toFixed(1)}" y="${b.top.toFixed(1)}" width="6" height="${(base - b.top).toFixed(1)}" fill="#fff" stroke="${RED_K}" stroke-width="2"/>`
    })

    const z = p => [620 + p[0] / 3, 1580 + p[1] / 3]
    const z5 = p => [p[0] / 1.452, 1500 + p[1] / 3]
    const ma1 = [
      ...[[20, 928], [100, 935], [200, 922], [300, 928], [370, 912], [470, 922], [570, 908], [640, 915], [760, 928], [870, 920], [905, 925]].map(z5),
      ...[[50, 680], [85, 655], [105, 618], [125, 615], [160, 630], [200, 655], [225, 605], [250, 590], [270, 530], [295, 460], [320, 408], [345, 435], [370, 380], [395, 345], [415, 310], [440, 298], [465, 305], [490, 325], [515, 350], [540, 375], [562, 398], [585, 365], [608, 335], [635, 343], [660, 350], [685, 360], [705, 395], [729, 443], [750, 385], [775, 355], [801, 240], [825, 190], [849, 160], [873, 195], [897, 225], [921, 255], [945, 265], [969, 283], [993, 285], [1017, 275], [1041, 320], [1065, 355], [1089, 368], [1113, 370], [1137, 390], [1161, 412], [1185, 430], [1209, 435], [1233, 468], [1257, 487], [1281, 465], [1305, 452], [1325, 452]].map(z)
    ]
    const ma2 = [
      ...[[20, 920], [100, 933], [200, 922], [300, 925], [400, 915], [540, 915], [640, 912], [760, 925], [800, 930], [900, 923]].map(z5),
      ...[[50, 677], [80, 668], [105, 652], [150, 655], [200, 655], [225, 615], [250, 600], [275, 570], [300, 545], [345, 520], [370, 480], [395, 420], [420, 375], [440, 355], [465, 372], [490, 350], [515, 343], [540, 343], [565, 348], [585, 343], [608, 330], [635, 347], [660, 365], [685, 380], [729, 385], [750, 362], [775, 350], [801, 310], [825, 302], [849, 300], [873, 292], [897, 290], [921, 250], [945, 235], [969, 222], [993, 240], [1017, 252], [1041, 285], [1065, 315], [1089, 325], [1113, 325], [1137, 330], [1161, 365], [1185, 392], [1209, 405], [1233, 425], [1257, 438], [1281, 440], [1305, 440], [1325, 442]].map(z)
    ]

    // Marcas del eje
    let ticks = ''
    for (let x = 1063; x > 196; x -= 8) {
      ticks += `M${x - 12} 2v${x === 1063 || x === 703 || x === 343 ? 17 : 9}`
    }

    this.shadowRoot.innerHTML = /* HTML */`
      <style>${VolChart.Styles}</style>
      <div class="bar">
        <tool-btn style="width:150px">成交额<span class="tri"></span></tool-btn>
        <span style="margin-left:5px">6.36亿</span>${arrow('#2a2a2a', false)}
        <span style="margin-left:22px;color:#ecc72b;letter-spacing:.2px">MA1:5.36亿</span>${arrow('#ecc72b', false, 9)}
        <span style="margin-left:15px;color:#d63bd6;letter-spacing:1.2px">MA2:5.46亿</span>${arrow('#d63bd6', true, 8)}
        <div class="tab"><svg width="20" height="34" viewBox="0 0 20 34" fill="none" stroke="#fff" stroke-width="4"><path d="M17 2L3 17l14 15"/></svg></div>
      </div>
      <div class="frame">
        <svg width="1056" height="228" viewBox="12 1587 1056 228">
          ${barSvg}
          <polyline points="${polyline(ma1)}" fill="none" stroke="#efbb1e" stroke-width="2.8" stroke-linejoin="round"/>
          <polyline points="${polyline(ma2)}" fill="none" stroke="#cf35cf" stroke-width="3.2" stroke-linejoin="round"/>
        </svg>
        <span class="max">14.43亿</span>
      </div>
      <div class="axis">
        <svg width="1056" height="20"><path d="${ticks}" stroke="#b5b5b5" stroke-width="1.4"/></svg>
        <div class="dates"><span>20260306</span><span>20260508</span><span>20260721</span><span>20260922</span></div>
      </div>
    `
  }
}

// Banner promocional
class PromoBanner extends HTMLElement {
  constructor () {
    super()
    this.attachShadow({ mode: 'open' })
    this.shadowRoot.innerHTML = /* HTML */`
      <style>
        :host { display: flex; align-items: center; height: 90px; margin: 19px 18px 0; padding: 0 38px 0 30px; border-radius: 45px; background: #fcebe2; color: #e66a2c;
          font: 400 39px/1 Roboto, "Noto Sans CJK SC", sans-serif; letter-spacing: .6px; white-space: nowrap; }
        .txt { margin-left: 54px; }
        .sep { margin-left: auto; width: 1.5px; height: 36px; background: #b99; }
        svg { display: block; flex: none; }
      </style>
      <svg width="46" height="40" viewBox="0 0 46 40">
        <path d="M0 13h3v14H0zM6 11l36-11h3v40h-3l-6-5-5 2-6-6-8 1-11-5z" fill="#ea5a0c"/>
      </svg>
      <span class="txt"><slot></slot></span>
      <span class="sep"></span>
      <svg width="32" height="34" viewBox="0 0 32 34" style="margin-left:16px"><path d="M1 1l30 32M31 1L1 33" stroke="#e66a2c" stroke-width="3.4"/></svg>
    `
  }
}

// Pestanas inferiores
class SubTabs extends HTMLElement {
  constructor () {
    super()
    this.attachShadow({ mode: 'open' })
  }

  static Styles = `
    :host { display: grid; grid-template-columns: repeat(7, 146.5px); height: 105px; margin-top: 18px; box-sizing: border-box; padding: 28px 0 0 27px;
      border-top: 2px solid #e2e2e2; border-bottom: 3px double #d8d8d8; font: 400 43px/46px Roboto, "Noto Sans CJK SC", sans-serif; color: #6c6c6c; }
    div { display: flex; flex-direction: column; align-items: center; }
    .on { color: ${ORANGE}; }
    .on i { display: block; width: 60px; height: 7px; background: ${ORANGE}; border-radius: 4px; margin-top: 12px; }
  `

  connectedCallback () {
    this.render()
  }

  render () {
    const tabs = ['股吧', '盘口', '资讯', '公告', '研报', '财务', '资料']
    this.shadowRoot.innerHTML = /* HTML */`
      <style>${SubTabs.Styles}</style>
      ${tabs.map((t, i) => i === 0 ? `<div class="on">${t}<i></i></div>` : `<div>${t}</div>`).join('')}
    `
  }
}

// Accion de la barra inferior
class BarAction extends HTMLElement {
  constructor () {
    super()
    this.attachShadow({ mode: 'open' })
    this.shadowRoot.innerHTML = /* HTML */`
      <style>
        :host { display: flex; flex-direction: column; align-items: center; padding-top: 11px; color: #6a6a6a; font: 400 34px/40px Roboto, "Noto Sans CJK SC", sans-serif; }
        :host([active]) { color: ${ORANGE}; font-size: 36px; }
        .ic { height: 58px; margin-bottom: 20px; }
      </style>
      <div class="ic"><slot name="icon"></slot></div>
      <slot></slot>
    `
  }
}

// Barra inferior
class BottomBar extends HTMLElement {
  constructor () {
    super()
    this.attachShadow({ mode: 'open' })
  }

  static Styles = `
    :host { display: grid; grid-template-columns: 274px repeat(4, 201px); height: 136px; background: #f6f7f9; font: 400 34px/40px Roboto, "Noto Sans CJK SC", sans-serif; color: #6a6a6a; }
    .tri { width: 0; height: 0; border-left: 10px solid transparent; border-right: 10px solid transparent; border-bottom: 8px solid #8a8a8a; margin: 10px 0 0 128px; }
    .pr { margin: 13px 0 0 60px; font-size: 38px; color: #12a520; letter-spacing: .2px; }
    .row { display: flex; margin: 9px 0 0 42px; }
    .row b { font-weight: 400; font-size: 37px; color: #12a520; margin-left: 45px; }
    svg { display: block; }
  `

  connectedCallback () {
    this.render()
  }

  render () {
    const g = 'fill="none" stroke="#6a6a6a" stroke-width="3.2"'
    this.shadowRoot.innerHTML = /* HTML */`
      <style>${BottomBar.Styles}</style>
      <div>
        <div class="tri"></div>
        <div class="pr">22361.22</div>
        <div class="row"><span>塑料</span><b>-0.27%</b></div>
      </div>
      <bar-action>
        <svg slot="icon" width="64" height="58" viewBox="0 0 64 58" ${g}>
          <path d="M28 2a27 27 0 0 1 28 30M44 50A27 27 0 0 1 8 22"/>
          <path d="M3 28l5-9 5 7M50 30l6 6 5-7" />
          <text x="32" y="40" font-family="Liberation Sans, sans-serif" font-size="32" fill="#6a6a6a" stroke="none" text-anchor="middle">¥</text>
        </svg>
        交易
      </bar-action>
      <bar-action>
        <svg slot="icon" width="56" height="56" viewBox="0 0 56 56" ${g} stroke-linejoin="round">
          <path d="M38 2H9a7 7 0 0 0-7 7v38a7 7 0 0 0 7 7h38a7 7 0 0 0 7-7V16"/>
          <path d="M46 1l6 4-24 33-6 3 1-7z" fill="#6a6a6a" stroke="none"/>
        </svg>
        发帖
      </bar-action>
      <bar-action>
        <svg slot="icon" width="54" height="54" viewBox="0 0 54 54" ${g}>
          <rect x="2" y="3" width="21" height="21" rx="3"/><path d="M40 1l12 13-12 13-12-13z"/>
          <rect x="2" y="31" width="21" height="21" rx="3"/><rect x="31" y="31" width="21" height="21" rx="3"/>
        </svg>
        功能
      </bar-action>
      <bar-action active>
        <svg slot="icon" width="56" height="56" viewBox="0 0 56 56" fill="none" stroke="${ORANGE}" stroke-width="3.2">
          <circle cx="28" cy="28" r="26"/><path d="M15 28h26M28 15v26"/>
        </svg>
        加自选
      </bar-action>
    `
  }
}

// Barra de navegacion de Android
class NavBar extends HTMLElement {
  constructor () {
    super()
    this.attachShadow({ mode: 'open' })
    this.shadowRoot.innerHTML = /* HTML */`
      <style>
        :host { display: flex; justify-content: center; align-items: center; height: 132px; padding-right: 10px; }
        div { width: 267px; display: flex; justify-content: center; }
      </style>
      <div><svg width="36" height="36" viewBox="0 0 36 36"><path d="M0 2h36M0 18h36M0 34h36" stroke="#aaa" stroke-width="3"/></svg></div>
      <div><svg width="36" height="36" viewBox="0 0 36 36"><rect x="2" y="2" width="32" height="32" rx="7" fill="none" stroke="#aaa" stroke-width="3"/></svg></div>
      <div><svg width="34" height="36" viewBox="0 0 34 36"><path d="M32 2v32L2 18z" fill="none" stroke="#aaa" stroke-width="3" stroke-linejoin="round"/></svg></div>
    `
  }
}

customElements.define('status-bar', StatusBar)
customElements.define('stock-header', StockHeader)
customElements.define('notice-bar', NoticeBar)
customElements.define('dots-icon', DotsIcon)
customElements.define('quote-panel', QuotePanel)
customElements.define('ticker-bar', TickerBar)
customElements.define('period-tabs', PeriodTabs)
customElements.define('tool-btn', ToolBtn)
customElements.define('chart-btn', ChartBtn)
customElements.define('k-chart', KChart)
customElements.define('vol-chart', VolChart)
customElements.define('promo-banner', PromoBanner)
customElements.define('sub-tabs', SubTabs)
customElements.define('bar-action', BarAction)
customElements.define('bottom-bar', BottomBar)
customElements.define('nav-bar', NavBar)
</script>
</body>
</html>
